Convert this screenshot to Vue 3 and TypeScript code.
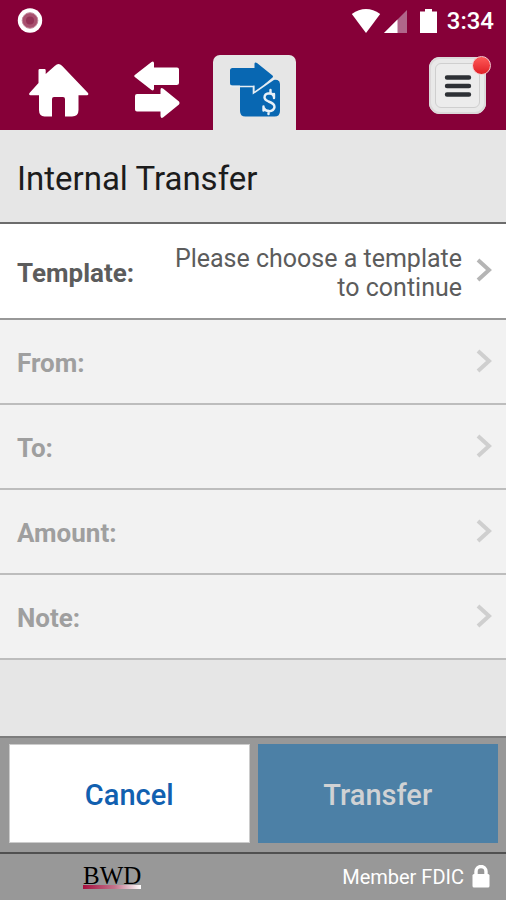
<script setup lang="ts">
import { ref } from 'vue'

interface Field {
  id: string
  label: string
  value: string
  enabled: boolean
}

const fields = ref<Field[]>([
  { id: 'template', label: 'Template:', value: 'Please choose a template to continue', enabled: true },
  { id: 'from', label: 'From:', value: '', enabled: false },
  { id: 'to', label: 'To:', value: '', enabled: false },
  { id: 'amount', label: 'Amount:', value: '', enabled: false },
  { id: 'note', label: 'Note:', value: '', enabled: false },
])
</script>

<template>
  <div class="screen">
    <header class="top">
      <div class="status">
        <svg class="record" width="26" height="26" viewBox="0 0 26 26" aria-hidden="true">
          <circle cx="13" cy="12.5" r="12.2" fill="#fff" />
          <circle cx="13" cy="12.5" r="7.8" fill="#a8506f" stroke="#c48a9e" stroke-width="1" />
          <circle cx="13" cy="12.5" r="4" fill="#933257" />
        </svg>
        <div class="indicators">
          <svg width="30" height="26" viewBox="0 0 30 26" aria-hidden="true">
            <path d="M15 25 L.8 6 Q15 -4.2 29.2 6 Z" fill="#fff" />
          </svg>
          <svg width="25" height="26" viewBox="0 0 25 26" aria-hidden="true">
            <path d="M24 2 V25 H1 Z" fill="#b0668a" />
            <path d="M14.500 11.500 V25 H1 Z" fill="#fff" />
          </svg>
          <svg class="battery" width="17" height="26" viewBox="0 0 17 26" aria-hidden="true">
            <path d="M5 1 h7 v2.500 h5 v21.500 h-17 v-21.500 h5 Z" fill="#fff" />
          </svg>
          <span class="clock">3:34</span>
        </div>
      </div>

      <nav class="nav">
        <a class="tab" href="#home" aria-label="Home">
          <svg width="60" height="54" viewBox="0 0 60 54" aria-hidden="true">
            <path
              d="M9.500 20 V7.200 Q9.500 6 10.700 6 H15.500 Q16.700 6 16.700 7.200 V11 L26 2.700 Q29.500 -.5 33 2.700 L59 30 Q60 32 58 32.300 H49.500 V47 Q49.500 53.500 43 53.500 H36 V36 Q36 34 34 34 H25 Q23 34 23 36 V53.500 H15.500 Q10 53 10 47 V32.300 H1.500 Q-.5 32 .5 30 Z"
              fill="#fff"
            />
          </svg>
        </a>
        <a class="tab" href="#transfers" aria-label="Transfers">
          <svg width="46" height="58" viewBox="0 0 46 58" aria-hidden="true">
            <path
              d="M.8 14 L17.500 1 Q20 -.3 20 2.500 V6.500 H43 Q45 6.500 45 8.500 V21.500 Q45 24 42.500 24 H20 V28 Q19.500 30.300 17.500 29 L.8 16 Q-.3 15 .8 14 Z M45 40.500 L29 27.500 Q26.500 26 26.500 29 V33 H3 Q1 33 1 35 V48.500 Q1 50.500 3 50.500 H26.500 V55 Q27 57.800 29 56.500 L45 43.500 Q46 42 45 40.500 Z"
              fill="#fff"
            />
          </svg>
        </a>
        <a class="tab active" href="#internal" aria-label="Internal Transfer" aria-current="page">
          <svg width="52" height="56" viewBox="0 0 52 56" aria-hidden="true">
            <path
              d="M11 19 H24.500 V29.500 L44 17.500 L48.500 18 Q51 19 51 22 V49 Q51 54.500 45.500 54.500 H16.500 Q11 54.500 11 49 Z"
              fill="#0867b2"
            />
            <path
              d="M1 8.500 Q1 6 3.500 6 H25.500 V1.500 Q26 -.3 28 1 L43.500 13.500 Q44.500 14.500 43.500 15.500 L27 29.500 Q25.500 30.500 25.500 28.500 V23.500 H3.500 Q1 23.500 1 21 Z"
              fill="#0867b2"
            />
            <path d="M1 24.500 H24.500 V31 L45.500 16.500" fill="none" stroke="#e6edf3" stroke-width="1.600" />
            <path
              d="M45 34.500 Q44 31.500 40.500 31.300 Q35.500 31.500 35.500 35.500 Q35.700 38 39.500 39.500 Q45.500 41.500 45.500 45 Q45 49 40 49.200 Q36 49 34.500 45.500 M45 32 V36 M34.500 44.500 V48.500 M41.500 28 V31.500 M39.500 49 V52"
              fill="none"
              stroke="#e8f1f8"
              stroke-width="2.400"
              stroke-linecap="round"
            />
          </svg>
        </a>
        <button class="menu" type="button" aria-label="Menu">
          <span class="menu-face">
            <svg width="28" height="24" viewBox="0 0 28 24" aria-hidden="true">
              <path d="M3 3.500 H25 M3 12 H25 M3 20.500 H25" stroke="#2d3035" stroke-width="4.400" stroke-linecap="round" />
            </svg>
          </span>
          <span class="dot"></span>
        </button>
      </nav>
    </header>

    <h1 class="title">Internal Transfer</h1>

    <main class="form">
      <button
        v-for="field in fields"
        :key="field.id"
        class="row"
        :class="{ current: field.enabled }"
        type="button"
        :disabled="!field.enabled"
      >
        <span class="label">{{ field.label }}</span>
        <span class="value">{{ field.value }}</span>
        <svg class="chevron" width="16" height="24" viewBox="0 0 16 24" aria-hidden="true">
          <path d="M2 2 L13 12 L2 22" fill="none" stroke="currentColor" stroke-width="4" />
        </svg>
      </button>
    </main>

    <div class="actions">
      <button class="action cancel" type="button">Cancel</button>
      <button class="action transfer" type="button" disabled>Transfer</button>
    </div>

    <footer class="footer">
      <span class="brand">BWD</span>
      <span class="member">
        Member FDIC
        <svg width="18" height="24" viewBox="0 0 18 24" aria-hidden="true">
          <path d="M4 11 V6.500 a5 5 0 0 1 10 0 V11" fill="none" stroke="#fff" stroke-width="3.400" />
          <rect x=".5" y="9" width="17" height="13.500" rx="1.500" fill="#fff" />
        </svg>
      </span>
    </footer>
  </div>
</template>

<style>
body {
  margin: 0;
}
</style>

<style scoped>
.screen {
  display: flex;
  flex-direction: column;
  min-height: 100vh;
  background: #e6e6e6;
  font-family: Roboto, 'Liberation Sans', sans-serif;
}

button {
  box-sizing: border-box;
  margin: 0;
  border: 0;
  font-family: inherit;
}

svg {
  display: block;
  flex: none;
}

.top {
  background: #860038;
}

.status {
  display: flex;
  align-items: center;
  justify-content: space-between;
  height: 41px;
  padding: 0 12px 0 17px;
}

.indicators {
  display: flex;
  align-items: center;
  gap: 2px;
}

.battery {
  margin: 0 8px 0 10px;
}

.clock {
  color: #fff;
  font-size: 24px;
  font-weight: 500;
  line-height: 28px;
}

.nav {
  display: flex;
  align-items: flex-start;
  gap: 15px;
  padding: 14px 20px 0 17px;
}

.tab {
  display: flex;
  align-items: center;
  justify-content: center;
  width: 83px;
  height: 70px;
  padding-bottom: 5px;
}

.active {
  border-radius: 7px 7px 0 0;
  background: #e6e6e6;
}

.menu {
  position: relative;
  width: 57px;
  height: 57px;
  margin: 2px 0 0 auto;
  padding: 6px;
  border-radius: 11px;
  background: #e9e9e9;
  box-shadow: inset 0 0 0 2px #dcd9da;
}

.menu-face {
  display: flex;
  align-items: center;
  justify-content: center;
  height: 43px;
  border: 1px solid #cfcfcf;
  border-radius: 6px;
  background: #ececec;
}

.dot {
  position: absolute;
  top: -1px;
  right: -5px;
  width: 17px;
  height: 17px;
  border: 1px solid #f3c9cc;
  border-radius: 50%;
  background: linear-gradient(#ff5a58, #e01f26);
}

.title {
  margin: 0;
  padding: 30px 17px 24px;
  border-bottom: 2px solid #6c6c6c;
  color: #1c1c1c;
  font-size: 33px;
  font-weight: 400;
  line-height: 38px;
}

.form {
  display: flex;
  flex-direction: column;
}

.row {
  display: flex;
  align-items: center;
  gap: 14px;
  min-height: 85px;
  padding: 4px 14px 0 17px;
  border-bottom: 2px solid #bdbdbd;
  background: #f2f2f2;
  color: #9f9f9f;
  font-size: 26px;
  line-height: 29px;
}

.current {
  min-height: 96px;
  border-color: #989898;
  background: #fff;
  color: #5c5c5c;
}

.label {
  font-weight: 700;
}

.value {
  flex: 1;
  font-size: 25px;
  text-align: right;
}

.chevron {
  padding-bottom: 6px;
  color: #cfcfcf;
}

.current .chevron {
  color: #b5b5b5;
}

.actions {
  display: flex;
  gap: 8px;
  margin-top: auto;
  padding: 6px 8px 9px 9px;
  border-top: 2px solid #7d7d7d;
  background: #989898;
}

.action {
  flex: 1 1 0;
  min-width: 0;
  height: 99px;
  padding: 2px 0 0;
  font-size: 29px;
  font-weight: 500;
}

.cancel {
  background: #fff;
  box-shadow: inset 0 0 0 1px #ccc;
  color: #1160b0;
}

.transfer {
  background: #4c80a6;
  color: #d0d2d4;
}

.footer {
  display: flex;
  align-items: center;
  justify-content: space-between;
  height: 46px;
  padding: 0 16px 0 83px;
  border-top: 2px solid #505050;
  background: #989898;
}

.brand {
  padding-bottom: 2px;
  background: linear-gradient(90deg, #a8103f, #c2748c 55%, #fff) bottom / 100% 4px no-repeat;
  color: #000;
  font-family: 'Liberation Serif', serif;
  font-size: 25px;
  line-height: 22px;
}

.member {
  display: flex;
  align-items: center;
  gap: 8px;
  color: #fff;
  font-size: 20px;
  line-height: 24px;
}
</style>
